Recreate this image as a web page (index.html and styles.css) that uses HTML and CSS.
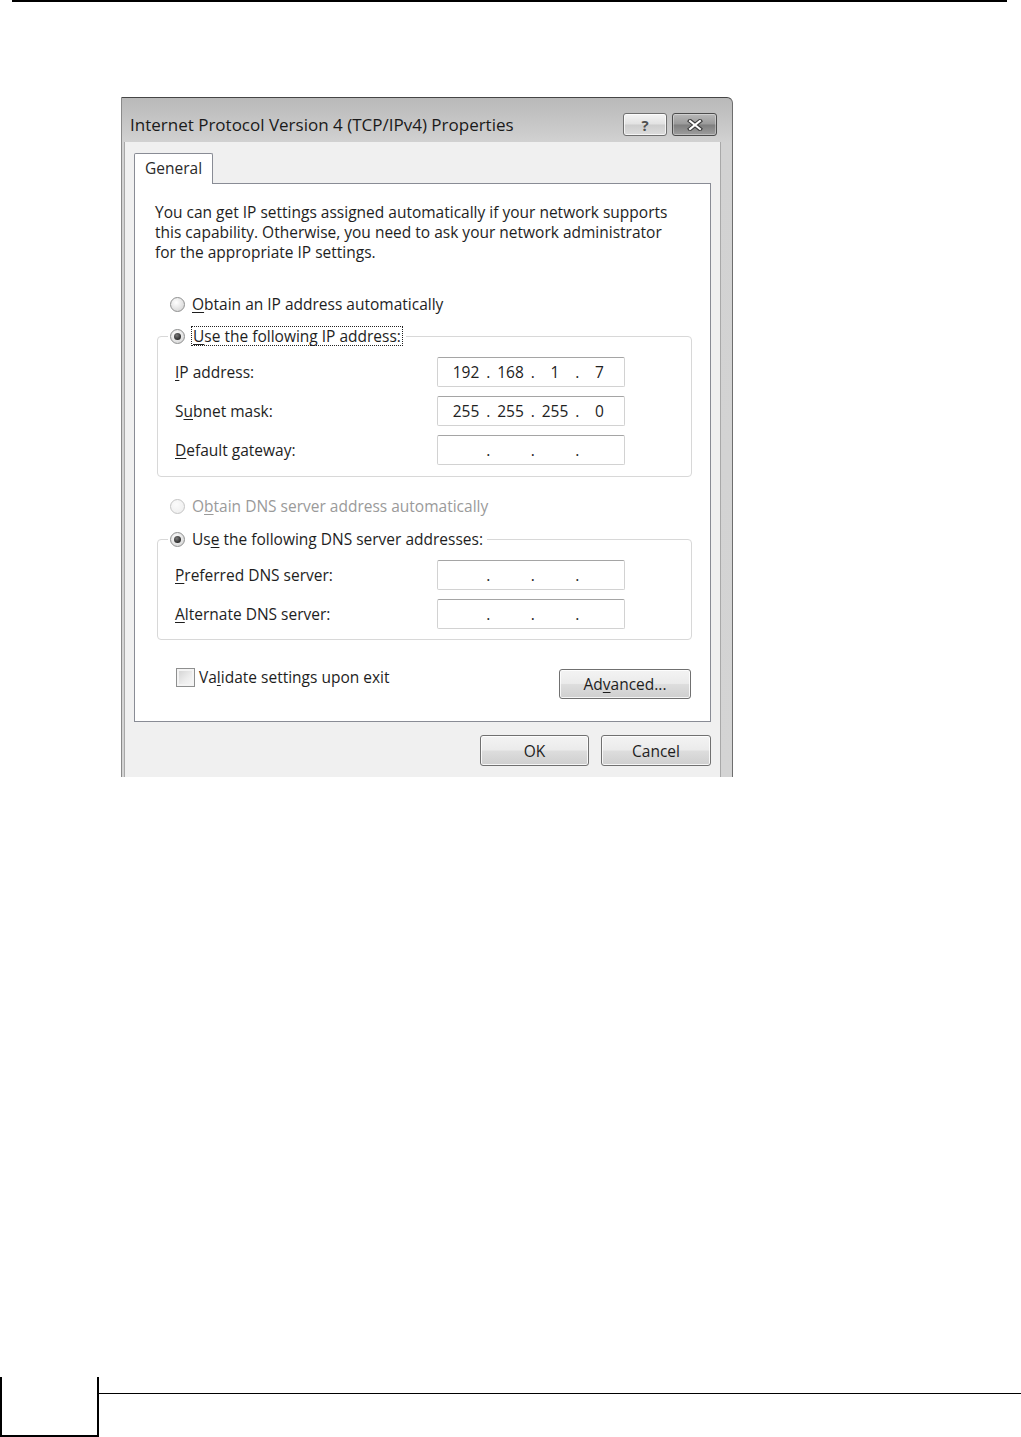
FILE: index.html
```html
<!DOCTYPE html>
<html lang="en">
<head>
    <meta charset="UTF-8">
    <meta name="viewport" content="width=device-width, initial-scale=1.0">
    <title>Internet Protocol Version 4 (TCP/IPv4) Properties</title>
    <link rel="stylesheet" href="styles.css">
</head>
<body>
<div class="page">
    <div class="top-rule"></div>

    <div class="dialog">
        <div class="titlebar">
            <span class="title">Internet Protocol Version 4 (TCP/IPv4) Properties</span>
            <div class="caption-buttons">
                <span class="cap-btn help">?</span>
                <span class="cap-btn close">
                    <svg width="18" height="12" viewBox="0 0 18 12">
                        <path d="M4 2 L14 10 M14 2 L4 10" stroke="#3c3c3c" stroke-width="4.2" stroke-linecap="square" fill="none"/>
                        <path d="M4 2 L14 10 M14 2 L4 10" stroke="#ffffff" stroke-width="2" stroke-linecap="square" fill="none"/>
                    </svg>
                </span>
            </div>
        </div>

        <div class="client">
            <div class="tabs">
                <span class="tab">General</span>
            </div>
            <div class="panel">
                <p class="intro">You can get IP settings assigned automatically if your network supports<br>this capability. Otherwise, you need to ask your network administrator<br>for the appropriate IP settings.</p>

                <div class="option first">
                    <span class="radio"></span>
                    <span><u>O</u>btain an IP address automatically</span>
                </div>

                <fieldset class="group ip-group">
                    <legend class="option">
                        <span class="radio checked"></span>
                        <span class="focus"><u>U</u>se the following IP address:</span>
                    </legend>
                    <div class="rows">
                        <div class="field-row">
                            <span class="field-label"><u>I</u>P address:</span>
                            <span class="ip-box"><span class="oct">192</span><span class="dot">.</span><span class="oct">168</span><span class="dot">.</span><span class="oct">1</span><span class="dot">.</span><span class="oct">7</span></span>
                        </div>
                        <div class="field-row">
                            <span class="field-label">S<u>u</u>bnet mask:</span>
                            <span class="ip-box"><span class="oct">255</span><span class="dot">.</span><span class="oct">255</span><span class="dot">.</span><span class="oct">255</span><span class="dot">.</span><span class="oct">0</span></span>
                        </div>
                        <div class="field-row">
                            <span class="field-label"><u>D</u>efault gateway:</span>
                            <span class="ip-box"><span class="oct"></span><span class="dot">.</span><span class="oct"></span><span class="dot">.</span><span class="oct"></span><span class="dot">.</span><span class="oct"></span></span>
                        </div>
                    </div>
                </fieldset>

                <div class="option second disabled">
                    <span class="radio"></span>
                    <span>O<u>b</u>tain DNS server address automatically</span>
                </div>

                <fieldset class="group dns-group">
                    <legend class="option">
                        <span class="radio checked"></span>
                        <span>Us<u>e</u> the following DNS server addresses:</span>
                    </legend>
                    <div class="rows">
                        <div class="field-row">
                            <span class="field-label"><u>P</u>referred DNS server:</span>
                            <span class="ip-box"><span class="oct"></span><span class="dot">.</span><span class="oct"></span><span class="dot">.</span><span class="oct"></span><span class="dot">.</span><span class="oct"></span></span>
                        </div>
                        <div class="field-row">
                            <span class="field-label"><u>A</u>lternate DNS server:</span>
                            <span class="ip-box"><span class="oct"></span><span class="dot">.</span><span class="oct"></span><span class="dot">.</span><span class="oct"></span><span class="dot">.</span><span class="oct"></span></span>
                        </div>
                    </div>
                </fieldset>

                <div class="panel-bottom">
                    <div class="check-option">
                        <span class="checkbox"></span>
                        <span>Va<u>l</u>idate settings upon exit</span>
                    </div>
                    <button type="button" class="win-btn advanced">Ad<u>v</u>anced...</button>
                </div>
            </div>

            <div class="dialog-buttons">
                <button type="button" class="win-btn ok">OK</button>
                <button type="button" class="win-btn cancel">Cancel</button>
            </div>
        </div>
    </div>

    <div class="page-footer">
        <div class="page-num"></div>
        <div class="footer-rule"></div>
    </div>
</div>
</body>
</html>
```

FILE: styles.css
```css
* {
    box-sizing: border-box;
}
html, body {
    margin: 0;
    padding: 0;
}
body {
    background: #fff;
    font-family: "Open Sans", "Noto Sans", Arial, sans-serif;
    font-size: 15.5px;
    color: #1e1e1e;
}
.page {
    height: 1437px;
    display: flex;
    flex-direction: column;
    overflow: hidden;
}
.top-rule {
    height: 2px;
    background: #000;
    margin: 0 14px 0 12px;
}

/* dialog window */
.dialog {
    width: 612px;
    height: 680px;
    margin: 95px 0 0 121px;
    display: flex;
    flex-direction: column;
    padding: 0 11px 0 2px;
    background: linear-gradient(to bottom, #b9b9b9 0, #c9c9c9 30px, #d2d2d2 45px, #d4d4d4 100%);
    border-top: 1px solid #454545;
    border-left: 1px solid #8a8a8a;
    border-right: 1px solid #6e6e6e;
    border-top-right-radius: 6px;
}
.titlebar {
    height: 44px;
    display: flex;
    align-items: flex-start;
    padding: 0 4px 0 6px;
}
.title {
    font-size: 17px;
    line-height: 22px;
    margin-top: 16px;
    color: #1a1a1a;
}
.caption-buttons {
    margin-left: auto;
    margin-top: 15px;
    display: flex;
    gap: 5px;
}
.cap-btn {
    height: 23px;
    border: 1px solid #6f6f6f;
    border-radius: 3px;
    display: flex;
    align-items: center;
    justify-content: center;
}
.help {
    width: 44px;
    background: linear-gradient(to bottom, #f4f4f4 0, #e2e2e2 48%, #cdcdcd 52%, #dcdcdc 100%);
    color: #505050;
    font-size: 15px;
    font-weight: bold;
    box-shadow: inset 0 0 0 1px rgba(255, 255, 255, 0.7);
}
.close {
    width: 45px;
    background: linear-gradient(to bottom, #b8b8b8 0, #9a9a9a 48%, #7e7e7e 52%, #9e9e9e 100%);
    border-color: #4c4c4c;
    box-shadow: inset 0 0 0 1px rgba(255, 255, 255, 0.35);
}

/* client area */
.client {
    flex: 1;
    background: #f0f0f0;
    padding: 11px 9px 0 9px;
    border-left: 1px solid #a8a8a8;
    border-right: 1px solid #a8a8a8;
}
.tabs {
    display: flex;
}
.tab {
    position: relative;
    z-index: 1;
    width: 79px;
    height: 31px;
    margin-bottom: -1px;
    padding-left: 10px;
    line-height: 28px;
    background: #fff;
    border: 1px solid #898c95;
    border-bottom: none;
    border-radius: 2px 2px 0 0;
    color: #2a2a2a;
}
.panel {
    height: 539px;
    background: #fff;
    border: 1px solid #898c95;
    padding: 18px 18px 0 20px;
}
.intro {
    margin: 0;
    line-height: 20px;
}

/* radio options */
.option {
    display: flex;
    align-items: center;
    gap: 7px;
    height: 20px;
    line-height: 20px;
}
.option.first {
    margin-top: 32px;
    padding-left: 15px;
}
.option.second {
    margin-top: 19px;
    padding-left: 15px;
}
.disabled {
    color: #9a9a9a;
}
.radio {
    width: 15px;
    height: 15px;
    border-radius: 50%;
    border: 1px solid #8e8f8f;
    background: radial-gradient(circle at 40% 35%, #ffffff 0, #e4e4e4 55%, #cfcfcf 100%);
    flex-shrink: 0;
    position: relative;
}
.disabled .radio {
    border-color: #c4c4c4;
    background: radial-gradient(circle at 40% 35%, #fbfbfb 0, #ececec 100%);
}
.radio.checked::after {
    content: "";
    position: absolute;
    left: 3px;
    top: 3px;
    width: 7px;
    height: 7px;
    border-radius: 50%;
    background: radial-gradient(circle at 40% 35%, #7a7a7a 0, #2c2c2c 70%);
}
.focus {
    outline: 1px dotted #222;
    padding: 0 1px;
    line-height: 18px;
}
u {
    text-underline-offset: 2px;
}

/* group boxes */
.group {
    margin: 12px 0 0 2px;
    padding: 0;
    border: 1px solid #d8d8d8;
    border-radius: 4px;
}
.group legend {
    margin-left: 10px;
    padding: 0 4px 0 2px;
}
.dns-group {
    margin-top: 13px;
}
.rows {
    display: flex;
    flex-direction: column;
    gap: 9px;
    padding: 11px 0 11px 17px;
}
.dns-group .rows {
    padding-bottom: 10px;
}
.field-row {
    display: flex;
    align-items: center;
    height: 30px;
}
.field-label {
    width: 262px;
}
.ip-box {
    width: 188px;
    height: 30px;
    display: flex;
    align-items: center;
    padding-left: 8px;
    border: 1px solid #d2d2d2;
    border-top-color: #a5a5a5;
    border-radius: 2px;
    background: #fff;
    color: #222;
}
.oct {
    width: 40px;
    text-align: center;
}
.dot {
    width: 4.5px;
    text-align: center;
}

/* bottom of the panel */
.panel-bottom {
    margin-top: 29px;
    display: flex;
    align-items: flex-start;
    justify-content: space-between;
}
.check-option {
    display: flex;
    align-items: center;
    gap: 4px;
    margin: -2px 0 0 21px;
    height: 20px;
}
.checkbox {
    width: 19px;
    height: 19px;
    border: 1px solid #8e8f8f;
    background: linear-gradient(135deg, #d0d0d0 0, #eeeeee 60%, #f8f8f8 100%);
    box-shadow: inset 0 0 0 2px #f4f4f4;
}
.win-btn {
    font-family: inherit;
    font-size: 15.5px;
    color: #1e1e1e;
    height: 31px;
    padding: 0;
    border: 1px solid #707070;
    border-radius: 3px;
    background: linear-gradient(to bottom, #f3f3f3 0, #ebebeb 48%, #dddddd 52%, #cfcfcf 100%);
    box-shadow: inset 0 0 0 1px rgba(255, 255, 255, 0.8);
}
.advanced {
    width: 132px;
    height: 30px;
    margin-right: 1px;
}
.dialog-buttons {
    display: flex;
    justify-content: flex-end;
    gap: 12px;
    margin-top: 13px;
}
.ok {
    width: 109px;
}
.cancel {
    width: 110px;
}

/* page footer */
.page-footer {
    margin-top: auto;
    height: 60px;
    display: flex;
}
.page-num {
    width: 99px;
    border: 2px solid #000;
    border-top: none;
}
.footer-rule {
    flex: 1;
    height: 1px;
    margin-top: 16px;
    background: #000;
}
```
